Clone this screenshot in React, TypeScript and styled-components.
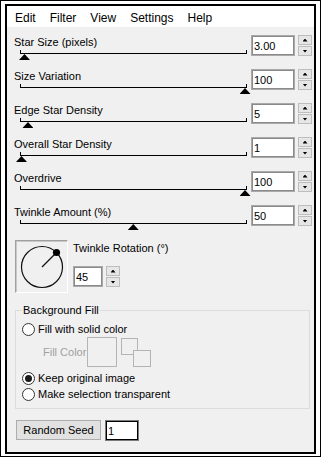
import React from "react";
import styled, { createGlobalStyle } from "styled-components";

const GlobalStyle = createGlobalStyle`
  html, body {
    margin: 0;
    padding: 0;
    background: #fff;
  }
  body {
    font-family: "Liberation Sans", Arial, sans-serif;
    font-size: 11px;
    color: #000;
  }
  * {
    box-sizing: border-box;
  }
`;

const Frame = styled.div`
  width: 321px;
  height: 457px;
  border: 1px solid #000;
  padding: 3px 4px 2px 4px;
  background: #fff;
`;

const Window = styled.div`
  height: 100%;
  border: 2px solid #000;
  background: #f0f0f0;
  display: flex;
  flex-direction: column;
`;

const MenuBar = styled.div`
  height: 21px;
  background: #fff;
  display: flex;
  align-items: flex-start;
  padding: 5px 0 0 1px;
  font-size: 12px;
`;

const MenuItem = styled.span`
  padding: 0 7px;
  line-height: 14px;
`;

const Content = styled.div`
  padding: 8px 2px 0 0;
  display: flex;
  flex-direction: column;
`;

const Row = styled.div`
  display: flex;
  height: 34px;
`;

const LeftCol = styled.div`
  flex: 1;
  display: flex;
  flex-direction: column;
`;

const Label = styled.div`
  padding-left: 7px;
  line-height: 14px;
  white-space: nowrap;
`;

const Track = styled.div`
  position: relative;
  margin-left: 13px;
  width: 227px;
  height: 13px;
`;

const Rail = styled.div`
  margin-top: 1px;
  height: 4px;
  border: 1px solid #000;
  border-top: none;
`;

const Thumb = styled.div`
  position: absolute;
  top: 5px;
  width: 11px;
  height: 6px;
  background: #000;
  clip-path: polygon(50% 0, 100% 100%, 0 100%);
`;

const ValueInput = styled.input<{ $w?: number; $focus?: boolean }>`
  width: ${(p) => p.$w ?? 44}px;
  height: 21px;
  margin: 0;
  padding: 0 0 0 2px;
  border: 1px solid ${(p) => (p.$focus ? "#7a7a7a" : "#a9a9a9")};
  box-shadow: inset 0 0 0 1px ${(p) => (p.$focus ? "#000" : "#8a8a8a")};
  background: #fff;
  font-family: "Liberation Sans", Arial, sans-serif;
  font-size: 11px;
  color: #000;
  outline: none;
`;

const Spin = styled.div`
  margin-left: 3px;
  width: 14px;
  height: 21px;
  display: flex;
  flex-direction: column;
  gap: 1px;
`;

const SpinButton = styled.div<{ $down?: boolean }>`
  flex: 1;
  background: #e6e6e6;
  border: 1px solid #bdbdbd;
  display: flex;
  align-items: center;
  justify-content: center;

  &::before {
    content: "";
    width: 5px;
    height: 3px;
    background: #000;
    clip-path: ${(p) =>
      p.$down ? "polygon(0 0, 100% 0, 50% 100%)" : "polygon(50% 0, 100% 100%, 0 100%)"};
  }
`;

const TwinkleRow = styled.div`
  display: flex;
  margin-top: 1px;
  padding-left: 8px;
`;

const DialBox = styled.div`
  width: 53px;
  height: 53px;
  border: 1px solid;
  border-color: #a0a0a0 #fff #fff #a0a0a0;
  box-shadow: inset 1px 1px 0 #c8c8c8;
`;

const RotationCol = styled.div`
  margin-left: 5px;
  padding-top: 1px;
  display: flex;
  flex-direction: column;
`;

const RotationLabel = styled.div`
  line-height: 14px;
`;

const InputGroup = styled.div<{ $top?: number }>`
  display: flex;
  margin-top: ${(p) => p.$top ?? 0}px;
`;

const Group = styled.fieldset`
  margin: 10px 2px 0 8px;
  padding: 4px 6px 6px 6px;
  border: 1px solid #dcdcdc;
  min-width: 0;
`;

const Legend = styled.legend`
  padding: 0 1px;
  line-height: 14px;
`;

const RadioRow = styled.div<{ $top?: number }>`
  display: flex;
  align-items: center;
  height: 16px;
  gap: 3px;
  margin-top: ${(p) => p.$top ?? 0}px;
`;

const Radio = styled.span<{ $checked?: boolean }>`
  width: 13px;
  height: 13px;
  border-radius: 50%;
  border: 1px solid #333;
  background: #fff;
  display: flex;
  align-items: center;
  justify-content: center;

  &::after {
    content: "";
    width: 7px;
    height: 7px;
    border-radius: 50%;
    background: ${(p) => (p.$checked ? "#1a1a1a" : "transparent")};
  }
`;

const FillRow = styled.div`
  display: flex;
  align-items: center;
  height: 30px;
  padding-left: 21px;
`;

const FillLabel = styled.span`
  width: 44px;
  color: #a0a0a0;
`;

const ColorBox = styled.div`
  width: 30px;
  height: 30px;
  border: 1px solid #b4b4b4;
`;

const Swatches = styled.div`
  position: relative;
  width: 31px;
  height: 30px;
  margin-left: 4px;
`;

const Swatch = styled.div<{ $x: number; $y: number; $w: number }>`
  position: absolute;
  left: ${(p) => p.$x}px;
  top: ${(p) => p.$y}px;
  width: ${(p) => p.$w}px;
  height: 17px;
  border: 1px solid #b4b4b4;
  background: #f0f0f0;
`;

const ButtonRow = styled.div`
  display: flex;
  align-items: flex-start;
  gap: 4px;
  margin-top: 11px;
  padding-left: 9px;
`;

const SeedButton = styled.button`
  width: 85px;
  height: 20px;
  margin: 0;
  padding: 0;
  background: #e1e1e1;
  border: 1px solid #adadad;
  font-family: "Liberation Sans", Arial, sans-serif;
  font-size: 11px;
  color: #000;
`;

const sliders = [
  { label: "Star Size (pixels)", value: "3.00", frac: 0.0134 },
  { label: "Size Variation", value: "100", frac: 1 },
  { label: "Edge Star Density", value: "5", frac: 0.029 },
  { label: "Overall Star Density", value: "1", frac: 0 },
  { label: "Overdrive", value: "100", frac: 1 },
  { label: "Twinkle Amount (%)", value: "50", frac: 0.5 },
];

function Spinner() {
  return (
    <Spin>
      <SpinButton />
      <SpinButton $down />
    </Spin>
  );
}

function Dial({ angle }: { angle: number }) {
  const r = 20.5;
  const rad = (angle * Math.PI) / 180;
  const dx = 26 + Math.cos(rad) * r;
  const dy = 26 - Math.sin(rad) * r;
  return (
    <DialBox>
      <svg width="51" height="51" viewBox="0 0 51 51" style={{ display: "block" }}>
        <circle cx="26" cy="26" r={r} fill="none" stroke="#111" strokeWidth="1.2" />
        <line x1="26" y1="26" x2={dx} y2={dy} stroke="#111" strokeWidth="1.2" />
        <circle cx={dx} cy={dy} r="3.6" fill="#000" />
      </svg>
    </DialBox>
  );
}

export default function App() {
  return (
    <>
      <GlobalStyle />
      <Frame>
        <Window>
          <MenuBar>
            <MenuItem>Edit</MenuItem>
            <MenuItem>Filter</MenuItem>
            <MenuItem>View</MenuItem>
            <MenuItem>Settings</MenuItem>
            <MenuItem>Help</MenuItem>
          </MenuBar>

          <Content>
            {sliders.map((s) => (
              <Row key={s.label}>
                <LeftCol>
                  <Label>{s.label}</Label>
                  <Track>
                    <Rail />
                    <Thumb style={{ left: 1.5 + s.frac * 223.5 - 5.5 }} />
                  </Track>
                </LeftCol>
                <ValueInput readOnly value={s.value} />
                <Spinner />
              </Row>
            ))}

            <TwinkleRow>
              <Dial angle={45} />
              <RotationCol>
                <RotationLabel>Twinkle Rotation (°)</RotationLabel>
                <InputGroup $top={11}>
                  <ValueInput $w={30} readOnly value="45" />
                  <Spinner />
                </InputGroup>
              </RotationCol>
            </TwinkleRow>

            <Group>
              <Legend>Background Fill</Legend>
              <RadioRow>
                <Radio />
                <span>Fill with solid color</span>
              </RadioRow>
              <FillRow>
                <FillLabel>Fill Color</FillLabel>
                <ColorBox />
                <Swatches>
                  <Swatch $x={0} $y={1} $w={17} />
                  <Swatch $x={12} $y={13} $w={18} />
                </Swatches>
              </FillRow>
              <RadioRow $top={3}>
                <Radio $checked />
                <span>Keep original image</span>
              </RadioRow>
              <RadioRow>
                <Radio />
                <span>Make selection transparent</span>
              </RadioRow>
            </Group>

            <ButtonRow>
              <SeedButton>Random Seed</SeedButton>
              <ValueInput $w={34} $focus readOnly value="1" />
            </ButtonRow>
          </Content>
        </Window>
      </Frame>
    </>
  );
}
